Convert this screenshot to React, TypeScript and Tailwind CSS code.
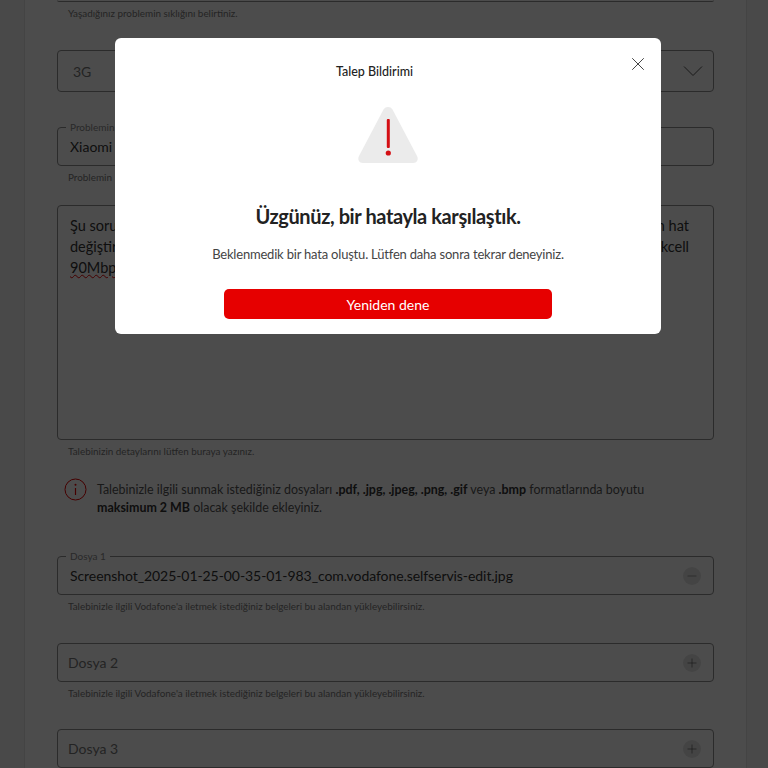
import { Minus, Plus, X } from "lucide-react";

const FONT = "font-['Lato','Noto_Sans',sans-serif]";

function Helper({ text }: { text: string }) {
  return <p className="ml-[11px] mt-[4px] h-[14px] text-[9.9px] leading-[14px] text-[#7a7a7a]">{text}</p>;
}

function FileField({
  label,
  value,
  icon,
}: {
  label: string;
  value?: string;
  icon: "plus" | "minus";
}) {
  return (
    <div className="relative flex h-[39px] items-center justify-between rounded-[4px] border border-[#8f8f8f] pl-[12px] pr-[12px]">
      {value && (
        <span className="absolute -top-[7px] left-[8px] bg-white px-[4px] text-[10px] leading-[12px] text-[#8a8a8a]">
          {label}
        </span>
      )}
      {value ? (
        <span className="text-[14px] tracking-[-0.07px] text-[#333333]">{value}</span>
      ) : (
        <span className="-ml-[2px] text-[14px] text-[#777777]">{label}</span>
      )}
      <span className="flex h-[18px] w-[18px] items-center justify-center rounded-full bg-[#e4e4e4]">
        {icon === "plus" ? (
          <Plus size={14} strokeWidth={1} color="#444444" />
        ) : (
          <Minus size={14} strokeWidth={1} color="#666666" />
        )}
      </span>
    </div>
  );
}

function AlertTriangle() {
  return (
    <svg width="62" height="58" viewBox="0 0 62 58">
      <path
        d="M26.5 3.5 C28.5 0.2 33.5 0.2 35.5 3.5 L60 50 C61.8 53.6 60 57 56 57 L6 57 C2 57 0.2 53.6 2 50 Z"
        fill="#ebebeb"
      />
      <rect x="29.8" y="13" width="3" height="29" rx="1" fill="#d40f14" />
      <circle cx="31.3" cy="47" r="2.6" fill="#d40f14" />
    </svg>
  );
}

export default function App() {
  const helperFile = "Talebinizle ilgili Vodafone'a iletmek istediğiniz belgeleri bu alandan yükleyebilirsiniz.";

  return (
    <div className={`relative h-[768px] w-[768px] overflow-hidden bg-[#f4f4f4] ${FONT}`}>
      <div className="ml-[24px] mr-[21px] h-[768px] border-x border-[#e4e4e4] bg-white pl-[32px] pr-[32px]">
        <div className="h-[2px] rounded-b-[4px] border-b border-[#8f8f8f]" />
        <Helper text="Yaşadığınız problemin sıklığını belirtiniz." />

        <div className="mt-[30px] flex h-[42px] items-center justify-between rounded-[4px] border border-[#8f8f8f] pl-[15px] pr-[10px]">
          <span className="text-[14px] text-[#777777]">3G</span>
          <svg width="20" height="12" viewBox="0 0 20 12" fill="none">
            <path d="M1 1.5 L10 10.5 L19 1.5" stroke="#555555" strokeWidth="1" />
          </svg>
        </div>

        <div className="relative mt-[35px] flex h-[39px] items-center rounded-[4px] border border-[#8f8f8f] pl-[12px]">
          <span className="absolute -top-[7px] left-[8px] bg-white px-[4px] text-[10px] leading-[12px] text-[#8a8a8a]">
            Problemin
          </span>
          <span className="text-[14px] text-[#333333]">Xiaomi</span>
        </div>
        <Helper text="Problemin" />

        <div className="mt-[21px] h-[235px] rounded-[4px] border border-[#8f8f8f] pl-[12px] pr-[24px] pt-[9px] text-[14.5px] leading-[21px] text-[#333333]">
          <div className="flex justify-between">
            <span>Şu sorun</span>
            <span>n hat</span>
          </div>
          <div className="flex justify-between">
            <span>değiştir</span>
            <span>kcell</span>
          </div>
          <span className="underline decoration-wavy decoration-[#e60000] decoration-1">90Mbps</span>
        </div>
        <Helper text="Talebinizin detaylarını lütfen buraya yazınız." />

        <div className="mt-[23px] flex gap-[10px] pl-[7px]">
          <svg className="mt-[-3px] shrink-0" width="23" height="23" viewBox="0 0 23 23" fill="none">
            <circle cx="11.5" cy="11.5" r="10.5" stroke="#e60000" strokeWidth="1" />
            <circle cx="11.5" cy="6.8" r="1" fill="#e60000" />
            <path d="M11.5 10 V17" stroke="#e60000" strokeWidth="1.2" />
          </svg>
          <p className="text-[12.45px] leading-[18px] text-[#555555]">
            Talebinizle ilgili sunmak istediğiniz dosyaları{" "}
            <b className="text-[#333333]">.pdf, .jpg, .jpeg, .png, .gif</b> veya <b className="text-[#333333]">.bmp</b>{" "}
            formatlarında boyutu
            <br />
            <b className="text-[#333333]">maksimum 2 MB</b> olacak şekilde ekleyiniz.
          </p>
        </div>

        <div className="mt-[39px]">
          <FileField
            label="Dosya 1"
            value="Screenshot_2025-01-25-00-35-01-983_com.vodafone.selfservis-edit.jpg"
            icon="minus"
          />
          <Helper text={helperFile} />
        </div>
        <div className="mt-[30px]">
          <FileField label="Dosya 2" icon="plus" />
          <Helper text={helperFile} />
        </div>
        <div className="mt-[29px]">
          <FileField label="Dosya 3" icon="plus" />
        </div>
      </div>

      <div className="absolute inset-0 bg-black/70 pt-[38px]">
        <div className="relative ml-[115px] flex h-[296px] w-[546px] flex-col items-center rounded-[6px] bg-white pt-[25px]">
          <button type="button" className="absolute right-[12px] top-[15px]">
            <X size={22} strokeWidth={1} color="#333333" />
          </button>
          <h2 className="mr-[27px] h-[18px] text-[12.5px] font-medium leading-[18px] text-[#222222]">Talep Bildirimi</h2>
          <div className="mt-[25px]">
            <AlertTriangle />
          </div>
          <h1 className="mt-[36px] h-[32px] text-[20px] font-bold leading-[32px] tracking-[-0.4px] text-[#222222]">
            Üzgünüz, bir hatayla karşılaştık.
          </h1>
          <p className="mt-[12px] h-[20px] text-[13px] leading-[20px] tracking-[-0.2px] text-[#444444]">
            Beklenmedik bir hata oluştu. Lütfen daha sonra tekrar deneyiniz.
          </p>
          <button
            type="button"
            className="mt-[25px] h-[30px] w-[328px] rounded-[5px] bg-[#e60000] text-[14px] text-white"
          >
            Yeniden dene
          </button>
        </div>
      </div>
    </div>
  );
}
